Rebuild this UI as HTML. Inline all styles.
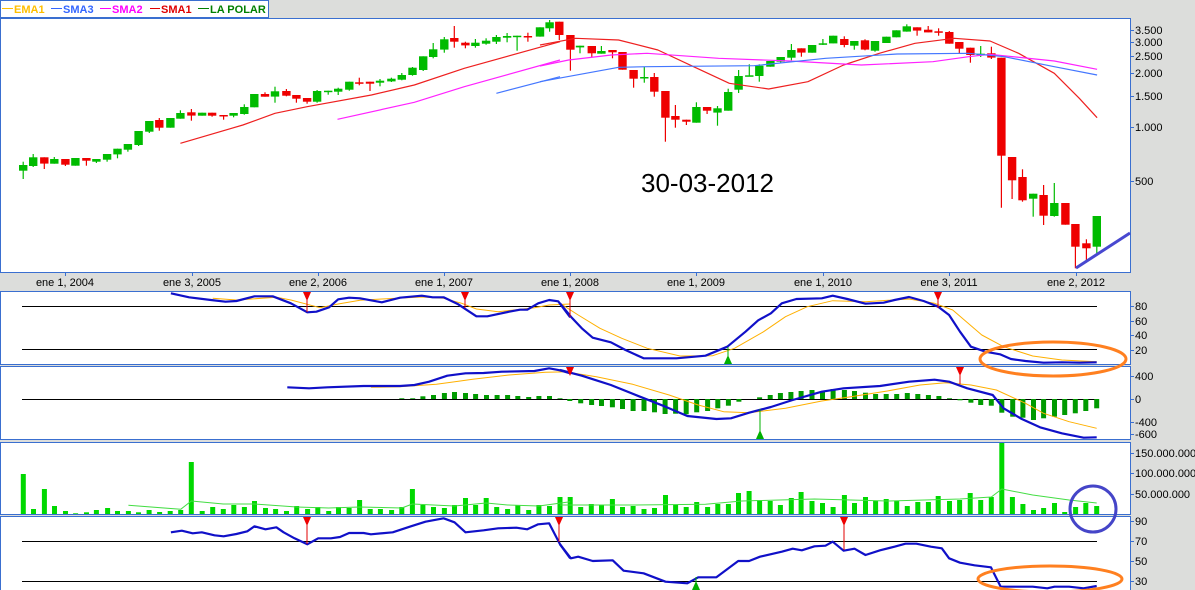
<!DOCTYPE html>
<html><head><meta charset="utf-8"><style>
html,body{margin:0;padding:0;background:#dcdddb;}
svg{display:block;font-family:"Liberation Sans",sans-serif;}
</style></head><body>
<svg id="s" width="1195" height="590" xmlns="http://www.w3.org/2000/svg"></svg>
<script>
var o=[];
function P(p){o.push(p);}
var B="#3a6fd0";
[[18,272],[291,364],[366,439],[442,514],[516,590]].forEach(function(a){
P('<rect x="0.5" y="'+(a[0]+0.5)+'" width="1130" height="'+(a[1]-a[0])+'" fill="#fff" stroke="'+B+'"/>');
});
P('<rect x="0.5" y="0.5" width="268" height="17" fill="#fff" stroke="'+B+'"/>');
var lg=[[2,14,"EMA1","#ffbf00"],[51,63,"SMA3","#3366ff"],[100,112,"SMA2","#ff00ff"],[150,161,"SMA1","#e00000"],[198,210,"LA POLAR","#008000"]];
lg.forEach(function(l){P('<line x1="'+l[0]+'" y1="8.5" x2="'+(l[1]-1)+'" y2="8.5" stroke="'+l[3]+'"/><text x="'+l[1]+'" y="13" font-size="11" font-weight="bold" fill="'+l[3]+'">'+l[2]+'</text>');});
function poly(pts,ox,sx,oy,col,w){var s=pts.map(function(p){return (p[0]/sx+ox).toFixed(1)+','+(p[1]/3+oy).toFixed(1)}).join(' ');
P('<polyline points="'+s+'" fill="none" stroke="'+col+'" stroke-width="'+w+'" stroke-linejoin="round"/>');}
var ticks=[[65,"ene 1, 2004"],[192,"ene 3, 2005"],[318,"ene 2, 2006"],[444,"ene 1, 2007"],[570,"ene 1, 2008"],[696,"ene 1, 2009"],[823,"ene 1, 2010"],[949,"ene 3, 2011"],[1076,"ene 2, 2012"]];
ticks.forEach(function(t){P('<line x1="'+t[0]+'.5" y1="272" x2="'+t[0]+'.5" y2="276" stroke="'+B+'"/><text x="'+t[0]+'" y="286" font-size="11" text-anchor="middle" fill="#000">'+t[1]+'</text>');});
var yl=[[30,"3.500"],[42,"3.000"],[56,"2.500"],[73,"2.000"],[96,"1.500"],[127,"1.000"],[181,"500"],
[306,"80"],[321,"60"],[335,"40"],[350,"20"],[376,"400"],[399,"0"],[422,"-400"],[434,"-600"],
[453,"150.000.000"],[473,"100.000.000"],[494,"50.000.000"],[521,"90"],[541,"70"],[561,"50"],[581,"30"]];
yl.forEach(function(t){P('<line x1="1130" y1="'+t[0]+'.5" x2="1134" y2="'+t[0]+'.5" stroke="'+B+'"/><text x="1135" y="'+(t[0]+4)+'" font-size="11" fill="#000">'+t[1]+'</text>');});
function cand(list,ox){list.forEach(function(c){var x=c[0]/2.8+ox,t=c[1]/3+15,b=c[2]/3+15,wt=(c[3]!=null?c[3]:c[1])/3+15,wb=(c[4]!=null?c[4]:c[2])/3+15;
var col=c[5]=='g'?'#00bb00':'#ee0000';
P('<line x1="'+x.toFixed(1)+'" y1="'+wt.toFixed(1)+'" x2="'+x.toFixed(1)+'" y2="'+wb.toFixed(1)+'" stroke="'+col+'" stroke-width="1.2"/>');
P('<rect x="'+(x-4.2).toFixed(1)+'" y="'+t.toFixed(1)+'" width="8.4" height="'+Math.max(1.5,b-t).toFixed(1)+'" fill="'+col+'"/>');});}
cand([[65,450,467,440,492,'g'],[93,427,453,417,456,'g'],[124,427,446,427,462,'r'],[152,432,446,426,446,'g'],[183,432,449,432,453,'r'],[211,429,452,null,null,'g'],[242,429,437,429,452,'r'],[270,432,440,432,444,'g'],[300,417,434,417,440,'g'],[329,401,418,401,430,'g'],[358,387,404,387,410,'g'],[388,348,390,348,393,'g'],[418,318,350,318,354,'g'],[446,315,338,309,347,'r'],[477,309,338,null,null,'g'],[505,294,311,286,311,'g'],[536,292,302,282,317,'r'],[566,293,302,null,null,'g'],[594,293,302,293,305,'r'],[626,300,302,300,314,'r'],[654,294,302,294,307,'g'],[684,276,297,268,299,'g'],[712,237,277,null,null,'g'],[742,237,245,232,245,'r'],[770,229,245,215,263,'g'],[802,228,242,222,244,'r'],[830,240,251,240,263,'r'],[860,249,260,249,266,'r'],[888,228,260,225,263,'g'],[919,227,230,227,239,'g'],[947,221,230,218,240,'g'],[978,200,224,200,227,'g'],[1006,202,204,188,211,'r'],[1036,200,206,200,228,'r'],[1064,197,203,192,214,'g'],[1096,191,199,188,201,'g'],[1125,180,194,174,196,'g'],[1155,158,180,156,182,'g'],[1185,124,165,124,168,'g'],[1213,103,126,84,130,'g'],[1244,73,104,66,113,'g'],[1272,69,80,33,98,'r'],[1303,83,91,80,100,'r'],[1331,83,93,72,98,'g'],[1361,77,86,70,89,'g'],[1390,66,80,60,87,'g'],[1420,63,68,54,82,'g'],[1448,62,64,62,107,'g'],[1478,63,65,53,80,'r']],0);
cand([[0,37,65,null,null,'g'],[27,22,40,15,50,'g'],[54,20,60,20,75,'r'],[85,60,104,60,167,'r'],[112,92,97,92,115,'g'],[145,93,115,93,127,'r'],[172,108,116,93,116,'g'],[203,105,112,105,130,'r'],[231,111,164,null,null,'r'],[262,165,191,165,218,'r'],[292,186,190,156,203,'g'],[320,186,230,174,245,'r'],[351,228,308,228,380,'r'],[379,303,314,270,338,'r'],[410,314,320,314,330,'r'],[438,276,323,262,323,'g'],[468,276,287,276,297,'r'],[497,280,293,273,332,'g'],[527,231,287,221,287,'g'],[556,183,224,165,234,'g'],[586,181,183,148,183,'g'],[614,152,183,148,200,'g'],[645,138,155,null,null,'g'],[674,126,140,126,145,'g'],[704,105,128,87,136,'g'],[732,100,113,100,125,'r'],[762,90,113,null,null,'g'],[792,85,88,72,90,'g'],[821,62,85,null,null,'g'],[852,72,90,64,97,'r'],[880,78,92,78,104,'g'],[910,76,104,73,106,'r'],[938,78,107,78,110,'g'],[970,65,84,null,null,'g'],[998,46,67,null,null,'g'],[1027,34,50,28,50,'g'],[1056,37,47,37,62,'r'],[1087,44,52,33,52,'r'],[1116,49,52,40,62,'r'],[1146,51,86,48,86,'r'],[1174,81,101,81,116,'r'],[1205,98,120,98,143,'r'],[1234,116,119,93,126,'g'],[1264,115,128,95,132,'r'],[1292,128,422,128,578,'r'],[1322,426,496,426,552,'r'],[1351,486,556,463,560,'r'],[1381,536,551,536,605,'g'],[1410,540,602,510,630,'r'],[1440,564,603,504,605,'g'],[1471,564,629,null,null,'r'],[1499,627,695,627,760,'r'],[1530,685,700,673,740,'r'],[1559,603,695,603,720,'g']],540);
poly([[505,385],[680,330],[770,295],[860,275],[1040,240],[1160,210],[1300,160],[1568,80]],0,2.8,15,"#ee2020",1.2);
poly([[0,90],[100,70],[220,75],[330,105],[430,155],[530,205],[640,222],[750,200],[850,150],[950,115],[1050,85],[1160,70],[1260,78],[1340,115],[1440,175],[1510,250],[1560,308]],540,2.8,15,"#ee2020",1.2);
poly([[945,313],[1160,262],[1300,215],[1568,135]],0,2.8,15,"#ff22ff",1.2);
poly([[0,153],[80,135],[200,120],[300,115],[500,130],[700,138],[900,150],[1100,140],[1200,125],[1260,118],[1440,138],[1560,163]],540,2.8,15,"#ff22ff",1.2);
poly([[1390,235],[1568,185]],0,2.8,15,"#4477ff",1.2);
poly([[0,200],[220,157],[300,155],[600,152],[800,130],[1000,117],[1200,115],[1300,125],[1440,155],[1560,180]],540,2.8,15,"#4477ff",1.2);
P('<line x1="1076" y1="268" x2="1130" y2="233" stroke="#4848d0" stroke-width="3"/>');
P('<text x="641" y="192" font-size="26" fill="#000">30-03-2012</text>');
[306,349,399,541,581].forEach(function(y){P('<line x1="22" y1="'+y+'.5" x2="1097" y2="'+y+'.5" stroke="#000"/>');});
var oy=285;
poly([[585,40],[650,45],[760,37],[800,45],[845,58],[880,68],[930,57],[990,46],[1050,42],[1160,36],[1220,40],[1270,55],[1310,72],[1370,80],[1420,74],[1470,68],[1510,60],[1568,57]],0,2.75,oy,"#ffb000",1);
poly([[0,55],[50,90],[110,130],[170,160],[240,190],[330,213],[420,212],[480,190],[560,140],[620,95],[680,65],[750,47],[840,50],[960,42],[1030,55],[1080,75],[1160,150],[1220,185],[1300,213],[1380,225],[1476,230]],560,2.75,oy,"#ffb000",1);
poly([[470,25],[520,37],[580,45],[620,50],[650,48],[700,34],[750,34],[800,55],[845,82],[870,80],[905,67],[930,43],[960,38],[990,40],[1050,52],[1100,38],[1160,32],[1190,37],[1220,37],[1260,58],[1310,94],[1340,94],[1400,80],[1430,74],[1450,74],[1480,55],[1510,45],[1535,49],[1568,97]],0,2.75,oy,"#1010c8",2.2);
poly([[0,55],[30,95],[60,130],[90,158],[140,172],[180,195],[230,220],[320,220],[400,212],[460,185],[510,140],[545,106],[580,85],[610,55],[650,42],[720,40],[750,32],[790,42],[840,56],[890,53],[920,45],[960,36],[1000,48],[1040,65],[1070,90],[1100,140],[1130,185],[1170,200],[1210,208],[1240,222],[1280,228],[1330,233],[1380,232],[1430,233],[1476,232]],560,2.75,oy,"#1010c8",2.2);
var h1=[[1105,340],[1135,340],[1163,334],[1192,330],[1222,324],[1250,321],[1280,324],[1308,327],[1338,330],[1367,330],[1396,330],[1424,333],[1454,336],[1482,333],[1511,333],[1540,340]];
var h2=[[27,348],[57,355],[87,360],[114,363],[144,367],[172,372],[201,378],[231,378],[260,382],[289,387],[318,386],[347,388],[376,382],[406,378],[434,370],[463,362],[492,350],[549,337],[578,330],[606,324],[635,321],[663,318],[693,315],[722,318],[751,312],[782,315],[810,318],[840,323],[868,327],[897,327],[926,327],[955,324],[984,327],[1013,330],[1042,333],[1071,340],[1100,346],[1130,353],[1157,360],[1186,362],[1215,383],[1245,395],[1273,398],[1302,405],[1330,400],[1360,395],[1388,390],[1417,385],[1446,378],[1476,370]];
function hist(l,ox){l.forEach(function(b){var x=b[0]/2.75+ox,y=b[1]/3+oy,z=399;P('<rect x="'+(x-2.5).toFixed(1)+'" y="'+Math.min(y,z).toFixed(1)+'" width="5" height="'+Math.abs(y-z).toFixed(1)+'" fill="#009a00"/>');});}
hist(h1,0);hist(h2,560);
poly([[1020,307],[1100,305],[1200,298],[1300,283],[1400,270],[1500,262],[1568,260]],0,2.75,oy,"#ffb000",1);
poly([[0,258],[100,275],[200,298],[300,330],[380,360],[450,380],[520,383],[620,370],[720,348],[800,335],[900,318],[990,300],[1060,293],[1130,300],[1200,315],[1280,355],[1330,385],[1400,410],[1476,430]],560,2.75,oy,"#ffb000",1);
poly([[790,307],[850,310],[900,307],[1000,303],[1100,303],[1140,300],[1180,290],[1230,272],[1280,265],[1330,264],[1380,260],[1470,258],[1510,250],[1540,256],[1568,265]],0,2.75,oy,"#1010c8",2.2);
poly([[0,255],[60,272],[140,300],[220,335],[290,365],[350,393],[430,402],[470,400],[520,383],[580,366],[640,345],[720,320],[780,310],[880,303],[960,290],[1030,284],[1070,290],[1120,310],[1190,330],[1220,370],[1270,402],[1320,427],[1380,445],[1440,458],[1476,457]],560,2.75,oy,"#1010c8",2.2);
var v1=[[64,567],[92,672],[122,612],[150,663],[180,678],[208,685],[238,682],[265,675],[296,669],[323,678],[353,678],[381,682],[410,675],[439,681],[468,678],[497,675],[526,531],[556,678],[585,666],[614,672],[643,660],[672,666],[700,648],[730,669],[758,672],[788,678],[816,663],[846,672],[874,666],[904,678],[931,666],[960,669],[989,645],[1018,672],[1046,672],[1077,675],[1105,666],[1134,612],[1163,660],[1192,666],[1222,669],[1250,660],[1280,639],[1308,660],[1337,639],[1366,666],[1396,672],[1424,660],[1454,675],[1482,660],[1511,663],[1540,663]];
var v2=[[0,636],[28,636],[57,666],[86,657],[114,660],[144,642],[172,666],[201,663],[231,672],[260,669],[290,630],[318,660],[347,666],[376,651],[406,666],[434,657],[463,657],[491,624],[520,618],[549,645],[578,648],[606,660],[636,639],[663,621],[693,648],[722,654],[751,666],[782,630],[810,654],[840,636],[868,648],[897,642],[926,648],[955,663],[984,651],[1013,651],[1040,633],[1071,648],[1099,645],[1128,624],[1157,645],[1186,636],[1215,474],[1244,636],[1273,657],[1302,675],[1330,669],[1360,654],[1388,681],[1418,666],[1446,654],[1476,663]];
function vol(l,ox){l.forEach(function(b){var x=b[0]/2.75+ox,y=b[1]/3+oy;P('<rect x="'+(x-2.5).toFixed(1)+'" y="'+y.toFixed(1)+'" width="5" height="'+(514-y).toFixed(1)+'" fill="#00d800"/>');});}
vol(v1,0);vol(v2,560);
poly([[353,661],[497,673],[526,648],[614,657],[700,657],[816,666],[904,669],[989,666],[1105,669],[1134,657],[1250,663],[1337,654],[1396,660],[1482,663],[1568,650]],0,2.75,oy,"#44dd44",1);
poly([[0,660],[200,660],[400,658],[500,648],[700,642],[900,648],[1100,642],[1186,636],[1215,612],[1300,630],[1400,645],[1476,654]],560,2.75,oy,"#44dd44",1);
poly([[470,742],[500,737],[530,745],[555,742],[590,751],[615,754],[650,747],[680,739],[700,724],[730,733],[760,727],[780,742],[810,760],[845,778],[875,760],[910,760],[935,756],[960,744],[1000,744],[1020,748],[1080,742],[1130,724],[1170,710],[1220,700],[1250,712],[1280,742],[1330,736],[1370,730],[1420,728],[1450,733],[1480,718],[1510,715],[1540,778],[1568,820]],0,2.75,oy,"#1010c8",2.2);
poly([[0,778],[30,820],[50,815],[90,828],[145,826],[175,857],[230,865],[290,890],[350,895],[380,877],[430,877],[490,828],[520,828],[550,815],[610,800],[640,791],[665,796],[700,784],[730,782],[750,770],[780,797],[810,791],[840,810],[880,796],[920,785],[950,776],[980,776],[1020,785],[1050,790],[1070,820],[1100,833],[1140,841],[1185,847],[1212,905],[1260,905],[1300,905],[1340,910],[1360,905],[1400,905],[1440,910],[1476,903]],560,2.75,oy,"#1010c8",2.2);
function red(x,top,y2){P('<line x1="'+x+'" y1="'+top+'" x2="'+x+'" y2="'+y2+'" stroke="#e00000"/><polygon points="'+(x-4)+','+top+' '+(x+4)+','+top+' '+x+','+(top+9)+'" fill="#ee0000"/>');}
function grn(x,bot,y2){P('<line x1="'+x+'" y1="'+bot+'" x2="'+x+'" y2="'+y2+'" stroke="#00b000"/><polygon points="'+(x-4)+','+bot+' '+(x+4)+','+bot+' '+x+','+(bot-9)+'" fill="#00b000"/>');}
red(307,292,312);red(465,292,308);red(570,292,317);red(938,292,308);grn(728,364,347);
red(570,367,373);red(960,367,384);grn(760,439,409);
red(307,517,544);red(559,517,542);red(844,517,550);grn(696,590,577);
P('<ellipse cx="1053" cy="359" rx="73" ry="17" fill="none" stroke="#ff8020" stroke-width="3"/>');
P('<ellipse cx="1050" cy="579" rx="72" ry="13" fill="none" stroke="#ff8020" stroke-width="3"/>');
P('<circle cx="1093" cy="509" r="23" fill="none" stroke="#4545c8" stroke-width="3"/>');
document.getElementById('s').innerHTML=o.join('');
</script>
</body></html>
